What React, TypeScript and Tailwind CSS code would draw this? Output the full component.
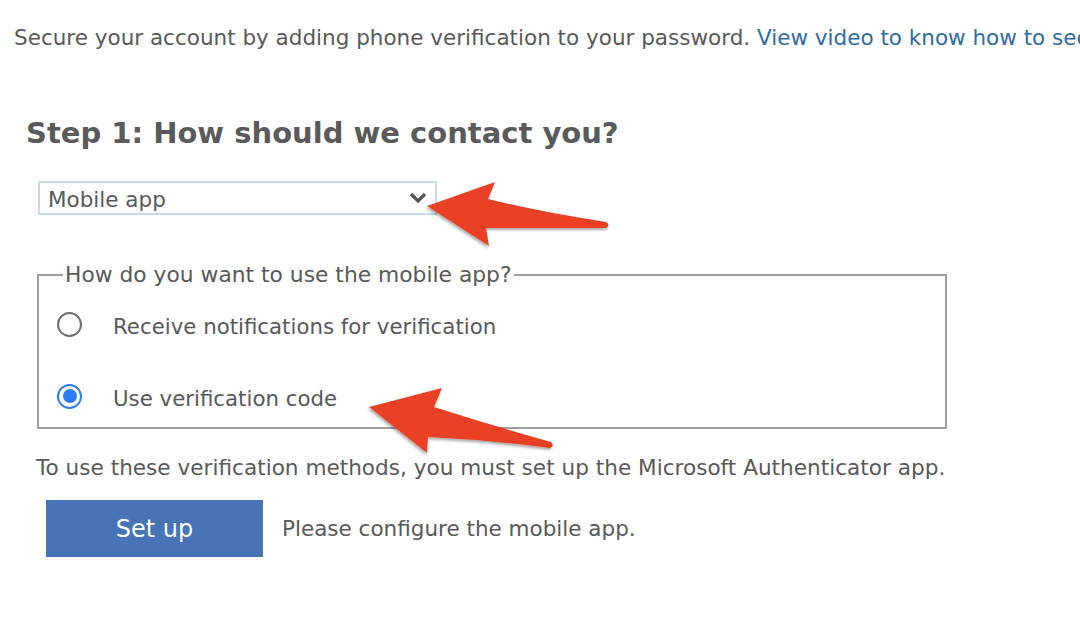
import React from "react";

function Arrows() {
  return (
    <svg
      className="absolute left-0 top-0 pointer-events-none"
      width="1080"
      height="642"
      viewBox="0 0 1080 642"
    >
      <defs>
        <filter id="sh" x="-20%" y="-20%" width="140%" height="160%">
          <feDropShadow dx="-1" dy="2" stdDeviation="1.6" floodColor="#000" floodOpacity="0.35" />
        </filter>
      </defs>
      <path
        d="M427 206 L495 182 L488 199 Q540 212 606 222 Q611 225 606 228 Q545 228 486 228 L489 246 Z"
        fill="#e94128"
        filter="url(#sh)"
      />
      <path
        d="M369 407 L442 388 L434 407 Q490 425 551 442 Q555 446 550 448 Q490 440 428 437 L427 453 Z"
        fill="#e94128"
        filter="url(#sh)"
      />
    </svg>
  );
}

export default function App() {
  const font = { fontFamily: '"DejaVu Sans", Verdana, sans-serif' };
  return (
    <div
      className="relative w-[1080px] h-[642px] overflow-hidden bg-white text-[#595959]"
      style={font}
    >
      <div className="pt-[24px] pl-[14px] whitespace-nowrap text-[21.5px] leading-[28px]">
        Secure your account by adding phone verification to your password.{" "}
        <span className="text-[#2f6ca3]">View video to know how to secure your Office 365 account</span>
      </div>

      <h2 className="mt-[63px] ml-[26px] text-[29px] leading-[36px] font-bold text-[#5a5a5a] whitespace-nowrap">
        Step 1: How should we contact you?
      </h2>

      <div className="mt-[30px] ml-[38px] w-[399px] h-[34px] border-2 border-[#c6dbee] flex items-center justify-between pl-[8px] pr-[8px]">
        <span className="text-[21.5px] leading-[28px] pt-[3px]">Mobile app</span>
        <svg width="18" height="12" viewBox="0 0 18 12">
          <path d="M2 2 L9 9 L16 2" fill="none" stroke="#555" strokeWidth="3.2" />
        </svg>
      </div>

      <fieldset className="mt-[46px] ml-[37px] w-[910px] h-[168px] border-2 border-[#a0a0a0] pl-[18px] pr-[14px]">
        <legend className="ml-[6px] px-[2px] text-[21.8px] leading-[28px] whitespace-nowrap">
          How do you want to use the mobile app?
        </legend>
        <div className="flex flex-col">
          <div className="flex items-center h-[28px] mt-[21px]">
            <span className="w-[25px] h-[25px] rounded-full border-2 border-[#6e6e6e] bg-white shrink-0" />
            <span className="ml-[31px] text-[21.3px] leading-[28px] whitespace-nowrap pt-[5px]">
              Receive notifications for verification
            </span>
          </div>
          <div className="flex items-center h-[28px] mt-[44px]">
            <span className="w-[25px] h-[25px] rounded-full border-[2.5px] border-[#2b7cf6] bg-white shrink-0 flex items-center justify-center">
              <span className="w-[14px] h-[14px] rounded-full bg-[#2b7cf6]" />
            </span>
            <span className="ml-[31px] text-[21.3px] leading-[28px] whitespace-nowrap pt-[6px]">
              Use verification code
            </span>
          </div>
        </div>
      </fieldset>

      <div className="mt-[25px] ml-[36px] text-[21.6px] leading-[28px] whitespace-nowrap">
        To use these verification methods, you must set up the Microsoft Authenticator app.
      </div>

      <div className="mt-[18px] ml-[46px] flex items-center">
        <button className="w-[217px] h-[57px] bg-[#4674b7] text-white text-[24px] leading-[30px]">
          Set up
        </button>
        <span className="ml-[19px] text-[21.5px] leading-[28px] whitespace-nowrap">
          Please configure the mobile app.
        </span>
      </div>

      <Arrows />
    </div>
  );
}
